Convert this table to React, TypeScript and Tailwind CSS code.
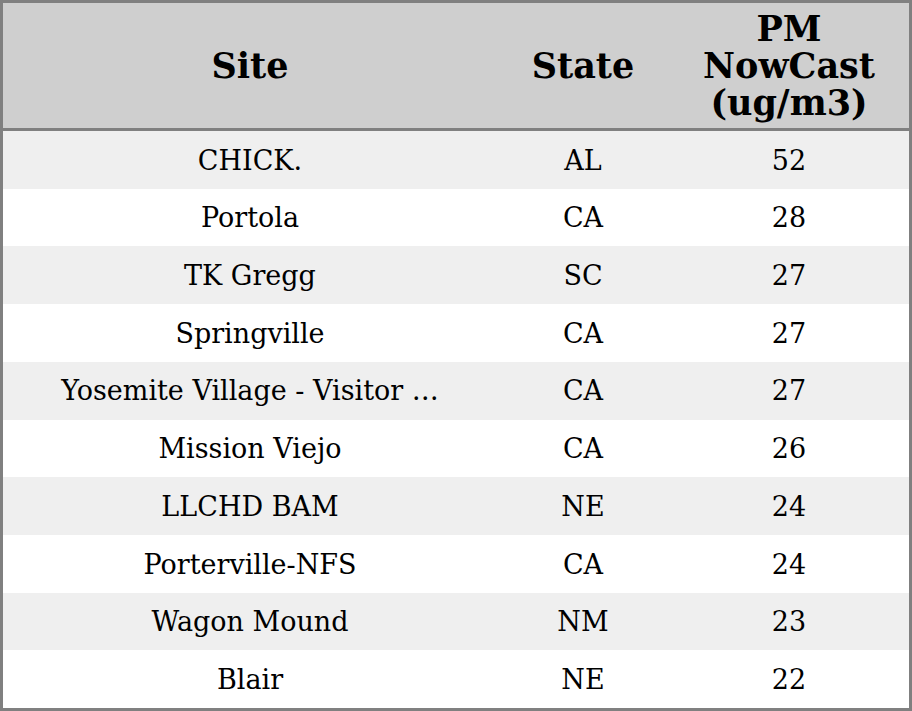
const rows: [string, string, number][] = [
  ["CHICK.", "AL", 52],
  ["Portola", "CA", 28],
  ["TK Gregg", "SC", 27],
  ["Springville", "CA", 27],
  ["Yosemite Village - Visitor …", "CA", 27],
  ["Mission Viejo", "CA", 26],
  ["LLCHD BAM", "NE", 24],
  ["Porterville-NFS", "CA", 24],
  ["Wagon Mound", "NM", 23],
  ["Blair", "NE", 22],
];

export default function App() {
  return (
    <div className="w-[912px] h-[711px] bg-white border-[3px] border-[#808080] flex flex-col text-black font-['DejaVu_Serif',serif]">
      <div className="h-[128px] shrink-0 grid grid-cols-[494px_172px_1fr] items-center bg-[#cfcfcf] border-b-[3px] border-[#808080] text-[35px] font-bold leading-[37px] text-center">
        <div>Site</div>
        <div>State</div>
        <div>
          PM
          <br />
          NowCast
          <br />
          (ug/m3)
        </div>
      </div>
      <div className="flex-1 flex flex-col">
        {rows.map(([site, state, pm], i) => (
          <div
            key={i}
            className={`flex-1 grid grid-cols-[494px_172px_1fr] items-center text-center text-[27px] pt-[2px] ${
              i % 2 === 0 ? "bg-[#efefef]" : "bg-white"
            }`}
          >
            <div>{site}</div>
            <div>{state}</div>
            <div>{pm}</div>
          </div>
        ))}
      </div>
    </div>
  );
}
